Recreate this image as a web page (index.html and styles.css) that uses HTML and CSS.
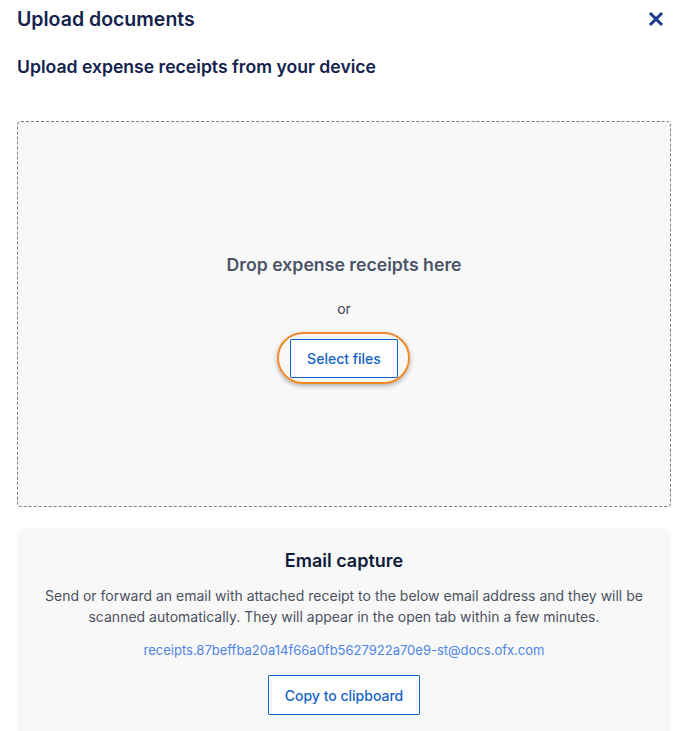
FILE: index.html
```html
<!DOCTYPE html>
<html>
<head>
<meta charset="utf-8">
<link rel="stylesheet" href="styles.css">
</head>
<body>
<div class="panel">
  <header class="head">
    <h1 class="title">Upload documents</h1>
    <button class="close" aria-label="Close">
      <svg width="16" height="16" viewBox="0 0 16 16"><path d="M2 2 L14 14 M14 2 L2 14" stroke="#1e3a8a" stroke-width="3" stroke-linecap="butt"/></svg>
    </button>
  </header>
  <h2 class="subtitle">Upload expense receipts from your device</h2>
  <section class="drop">
    <p class="drop-title">Drop expense receipts here</p>
    <p class="or">or</p>
    <span class="focus-wrap"><button class="btn">Select files</button></span>
  </section>
  <section class="email">
    <h3 class="email-title">Email capture</h3>
    <p class="email-text">Send or forward an email with attached receipt to the below email address and they will be scanned automatically. They will appear in the open tab within a few minutes.</p>
    <p class="address">receipts.87beffba20a14f66a0fb5627922a70e9-st@docs.ofx.com</p>
    <button class="btn btn-copy">Copy to clipboard</button>
  </section>
</div>
</body>
</html>
```
FILE: styles.css
```css
html, body {
  margin: 0;
  padding: 0;
  background: #ffffff;
  font-family: Inter, "Noto Sans", sans-serif;
  overflow: hidden;
}
.panel {
  width: 654px;
  padding: 0 0 0 17px;
}
.head {
  display: flex;
  justify-content: space-between;
  align-items: center;
  height: 38px;
}
.title {
  margin: 0;
  font-size: 19.5px;
  font-weight: 600;
  color: #13224d;
}
.close {
  background: none;
  border: 0;
  padding: 0;
  margin-right: 3px;
  width: 24px;
  height: 24px;
  display: flex;
  align-items: center;
  justify-content: center;
}
.subtitle {
  margin: 10px 0 0;
  font-size: 17.6px;
  font-weight: 600;
  color: #13224d;
  line-height: 38px;
}
.drop {
  margin-top: 35px;
  height: 386px;
  box-sizing: border-box;
  border: 1.5px dashed #7a7d8c;
  border-radius: 4px;
  background: #f8f8f8;
  display: flex;
  flex-direction: column;
  align-items: center;
  padding-top: 131px;
}
.drop-title {
  margin: 0;
  font-size: 17.7px;
  font-weight: 600;
  color: #4b5466;
  line-height: 24px;
}
.or {
  margin: 22px 0 0;
  font-size: 14px;
  color: #3d4150;
  line-height: 20px;
}
.focus-wrap {
  position: relative;
  margin-top: 20px;
  display: inline-flex;
}
.focus-wrap::before {
  content: "";
  position: absolute;
  left: -13px;
  right: -12px;
  top: -7px;
  bottom: -6px;
  border: 2px solid #f0892a;
  border-radius: 26px;
  box-shadow: 0 2px 5px rgba(0, 0, 0, 0.3);
  pointer-events: none;
}
.btn {
  font-family: Inter, "Noto Sans", sans-serif;
  font-size: 14px;
  font-weight: 500;
  color: #1463c8;
  background: #ffffff;
  border: 1px solid #1463c8;
  border-radius: 1px;
  height: 39px;
  padding: 0 16px;
}
.email {
  margin-top: 21px;
  background: #f8f8f8;
  border-radius: 8px;
  padding: 20px 20px 30px;
  display: flex;
  flex-direction: column;
  align-items: center;
  text-align: center;
}
.email-title {
  margin: 0;
  font-size: 18px;
  font-weight: 600;
  color: #0f1a3a;
  line-height: 26px;
}
.email-text {
  margin: 11px 0 0;
  font-size: 14px;
  line-height: 21px;
  color: #4b5161;
}
.address {
  margin: 14px 0 0;
  font-size: 13px;
  line-height: 18px;
  color: #4e85e6;
}
.btn-copy {
  margin-top: 16px;
  height: 40px;
}
```
